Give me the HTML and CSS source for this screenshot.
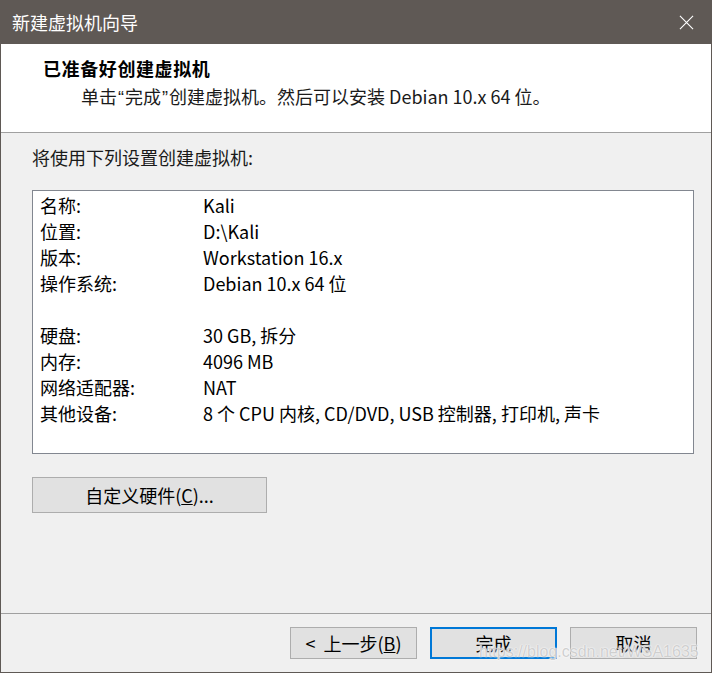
FILE: index.html
```html
<!DOCTYPE html>
<html lang="zh-CN">
<head>
  <meta charset="UTF-8">
  <title>新建虚拟机向导</title>
  <link rel="stylesheet" href="styles.css">
</head>
<body>
  <div class="window">
    <div class="titlebar">
      <span class="title">新建虚拟机向导</span>
      <svg class="close" width="16" height="16" viewBox="0 0 16 16">
        <path d="M1 1 L15 15 M15 1 L1 15" stroke="#ffffff" stroke-width="1.2" fill="none"/>
      </svg>
    </div>

    <div class="header">
      <div class="heading">已准备好创建虚拟机</div>
      <div class="subtitle">单击<span class="q">“</span>完成<span class="q">”</span>创建虚拟机。然后可以安装 Debian 10.x 64 位。</div>
    </div>

    <div class="content">
      <div class="intro">将使用下列设置创建虚拟机:</div>
      <div class="listbox">
        <div class="row"><span>名称:</span><span>Kali</span></div>
        <div class="row"><span>位置:</span><span>D:\Kali</span></div>
        <div class="row"><span>版本:</span><span>Workstation 16.x</span></div>
        <div class="row"><span>操作系统:</span><span>Debian 10.x 64 位</span></div>
        <div class="row"></div>
        <div class="row"><span>硬盘:</span><span>30 GB, 拆分</span></div>
        <div class="row"><span>内存:</span><span>4096 MB</span></div>
        <div class="row"><span>网络适配器:</span><span>NAT</span></div>
        <div class="row"><span>其他设备:</span><span>8 个 CPU 内核, CD/DVD, USB 控制器, 打印机, 声卡</span></div>
      </div>
      <button type="button" class="btn btn-custom">自定义硬件(<u>C</u>)...</button>
    </div>

    <div class="footer">
      <button type="button" class="btn">&lt;&nbsp; 上一步(<u>B</u>)</button>
      <button type="button" class="btn btn-default">完成</button>
      <button type="button" class="btn">取消</button>
    </div>

    <div class="watermark">https://blog.csdn.net/WSA1635</div>
  </div>
</body>
</html>
```

FILE: styles.css
```css
/* Okno dialogowe */
body {
  margin: 0;
  padding: 0;
  font-family: "Noto Sans CJK SC", sans-serif;
  font-size: 18px;
  color: #000;
  background-color: #f0f0f0;
}
.window {
  position: relative;
  width: 712px;
  height: 673px;
  box-sizing: border-box;
  border: 1px solid #5f5955;
  border-top: none;
  background-color: #f0f0f0;
  display: flex;
  flex-direction: column;
  overflow: hidden;
}
.titlebar {
  height: 44px;
  flex: none;
  background-color: #5f5955;
  color: #fff;
  display: flex;
  align-items: center;
  justify-content: space-between;
  padding: 0 17px 0 11px;
}
.title {
  font-size: 18px;
  line-height: 24px;
}
.close {
  width: 15px;
  height: 15px;
}
/* Naglowek */
.header {
  height: 89px;
  flex: none;
  box-sizing: border-box;
  background-color: #fff;
  border-bottom: 1px solid #a0a0a0;
  padding: 10px 0 0 42px;
}
.heading {
  font-weight: bold;
  line-height: 28px;
  letter-spacing: 0.6px;
}
.subtitle {
  line-height: 28px;
  padding-left: 38px;
  color: #1a1a1a;
}
.q {
  font-family: "Liberation Sans", Arial, sans-serif;
  padding: 0 1px;
}
/* Tresc */
.content {
  padding: 11px 16px 0 31px;
}
.intro {
  line-height: 26px;
  color: #1a1a1a;
}
.listbox {
  margin-top: 20px;
  width: 662px;
  height: 264px;
  box-sizing: border-box;
  border: 1px solid #828790;
  background-color: #fff;
  padding: 1px 7px;
}
.row {
  display: grid;
  grid-template-columns: 163px auto;
  height: 26px;
  line-height: 26px;
  white-space: nowrap;
}
.btn {
  font-family: inherit;
  font-size: 18px;
  color: #000;
  background-color: #e1e1e1;
  border: 1px solid #adadad;
  padding: 0;
  width: 127px;
  height: 32px;
  line-height: 28px;
  cursor: pointer;
}
.btn-custom {
  display: block;
  margin-top: 23px;
  width: 235px;
  height: 36px;
}
.btn-default {
  border: 2px solid #0078d7;
}
/* Stopka */
.footer {
  margin-top: auto;
  height: 59px;
  box-sizing: border-box;
  border-top: 1px solid #a0a0a0;
  display: flex;
  justify-content: flex-end;
  align-items: flex-start;
  gap: 13px;
  padding: 13px 14px 0 0;
}
.watermark {
  position: absolute;
  left: 478px;
  top: 643px;
  font-family: "Liberation Sans", Arial, sans-serif;
  font-size: 16px;
  color: rgba(195, 195, 195, 0.8);
  text-shadow: 0 0 2px #fff, 0 0 1px #fff;
  pointer-events: none;
}
```
